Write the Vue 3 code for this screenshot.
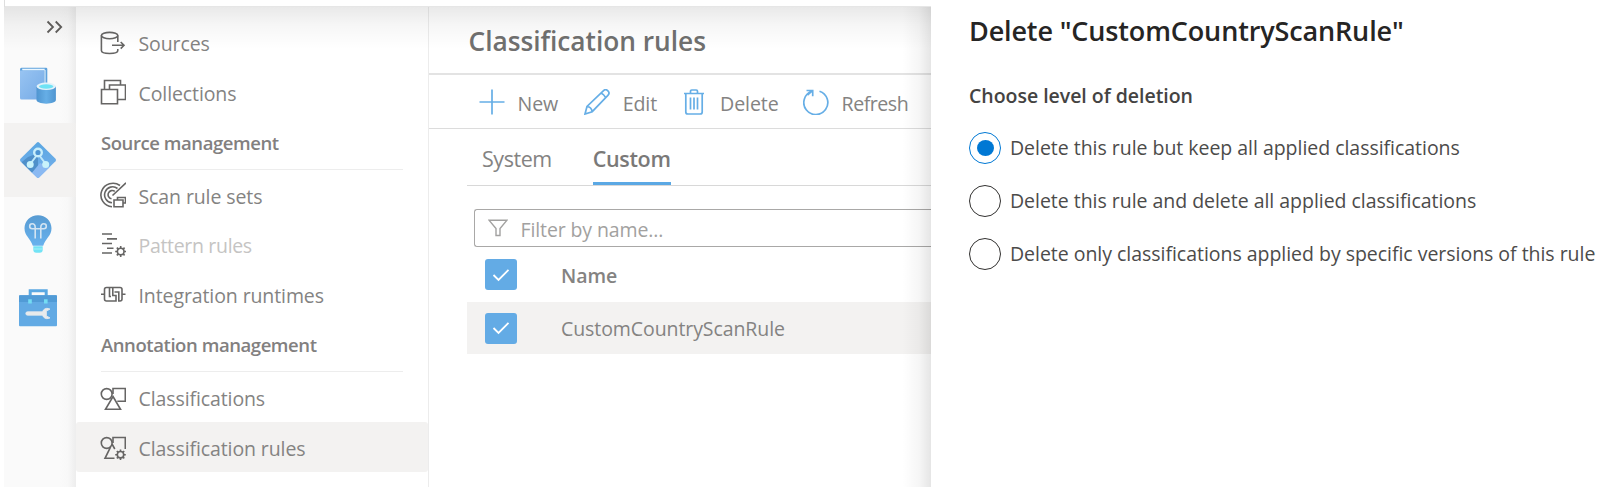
<script setup>
import { ref } from 'vue'

const rail = ['catalog', 'map', 'insights', 'manage']
const activeRail = 'map'

const sections = [
  { items: [{ label: 'Sources', icon: 'sources' }, { label: 'Collections', icon: 'collections' }] },
  {
    title: 'Source management',
    items: [
      { label: 'Scan rule sets', icon: 'scan' },
      { label: 'Pattern rules', icon: 'pattern', disabled: true },
      { label: 'Integration runtimes', icon: 'runtime' }
    ]
  },
  {
    title: 'Annotation management',
    items: [
      { label: 'Classifications', icon: 'classifications' },
      { label: 'Classification rules', icon: 'rules', active: true }
    ]
  }
]

const options = [
  'Delete this rule but keep all applied classifications',
  'Delete this rule and delete all applied classifications',
  'Delete only classifications applied by specific versions of this rule'
]
const selected = ref(0)
</script>

<template>
  <div class="page">
    <div class="app">
      <aside class="rail">
        <button class="expand" aria-label="Expand">
          <svg width="18" height="14" viewBox="0 0 18 14"><path d="M1.500 1.500 7 7l-5.500 5.500M9.700 1.500 15.200 7l-5.500 5.500" /></svg>
        </button>
        <div v-for="name in rail" :key="name" class="rail-item" :class="{ active: name === activeRail }">
          <svg v-if="name === 'catalog'" width="38" height="38" viewBox="0 0 38 38">
            <defs>
              <linearGradient id="book" x1="0" y1="0" x2="1" y2="1"><stop offset="0" stop-color="#98c4f2" /><stop offset="1" stop-color="#76abe6" /></linearGradient>
              <linearGradient id="cyl" x1="0" x2="1"><stop offset="0" stop-color="#4f95d0" /><stop offset=".5" stop-color="#66aee6" /><stop offset="1" stop-color="#4f95d0" /></linearGradient>
            </defs>
            <path d="M2.500 .8H27a1.300 1.300 0 0 1 1.300 1.300V31H1V2.500Q1 .8 2.500 .8z" fill="#5fa2dc" />
            <path d="M3 1.800H25.700V3.600H3.500z" fill="#eaf6ff" />
            <path d="M1 3.400H25V32.500H2.500Q1 32.500 1 31z" fill="url(#book)" />
            <path d="M26 3v14" stroke="#d9ebfb" stroke-width="1.200" />
            <path d="M17.500 19.500v13.600c0 2 4.200 3.600 9.700 3.600s9.700-1.600 9.700-3.600V19.500z" fill="url(#cyl)" />
            <ellipse cx="27.200" cy="19.300" rx="9.700" ry="3.700" fill="#e3f2fa" />
            <ellipse cx="27.200" cy="19.500" rx="7.200" ry="2.200" fill="#6fe3f5" />
          </svg>
          <svg v-else-if="name === 'map'" width="38" height="38" viewBox="0 0 38 38">
            <defs><linearGradient id="dia" x1="0" y1="0" x2="0" y2="1"><stop offset="0" stop-color="#5aa7e2" /><stop offset="1" stop-color="#76b0ec" /></linearGradient></defs>
            <path d="M17.700 1.700Q19 .5 20.300 1.700L36.500 17.700Q37.700 19 36.500 20.300L20.300 36.300Q19 37.500 17.700 36.300L1.500 20.300Q.3 19 1.500 17.700z" fill="url(#dia)" />
            <path d="M19 12V27L13 31.800 2.500 21.300 9 16z" fill="#4f90ca" />
            <path d="M21 22 30.500 26.300 20.300 36.300Q19 37.500 17.700 36.300L13 31.800z" fill="#8ab9f2" />
            <path d="M18 14 12 22M20 14l6 8" stroke="#bfe9fb" stroke-width="2" />
            <circle cx="19" cy="11.500" r="3.800" fill="#4e95d3" stroke="#c8eefb" stroke-width="2.400" />
            <circle cx="11.200" cy="23.500" r="3.500" fill="#c8f2fb" /><circle cx="26.700" cy="23.500" r="3.500" fill="#c8f2fb" />
          </svg>
          <svg v-else-if="name === 'insights'" width="38" height="38" viewBox="0 0 38 38">
            <defs><linearGradient id="bulb" x1="0" y1="0" x2="0" y2="1"><stop offset="0" stop-color="#589bd2" /><stop offset="1" stop-color="#68b2ee" /></linearGradient></defs>
            <path d="M19 .3C11.300 .3 5.500 6.200 5.500 13.300c0 7.700 6 9.900 8.300 17.500h10.400c2.300-7.600 8.300-9.800 8.300-17.500C32.500 6.200 26.700 .3 19 .3z" fill="url(#bulb)" />
            <path d="M14.300 31.300h9.400v3.500a3 3 0 0 1-3 3h-3.400a3 3 0 0 1-3-3z" fill="#73e3f5" /><path d="M14.300 34h9.400" stroke="#a6f1fa" />
            <path d="M16.200 23.500V12.500c0-2-1.200-3.800-3-3.800a2.500 2.500 0 0 0 0 5H24.800a2.500 2.500 0 0 0 0-5c-1.800 0-3 1.800-3 3.800V23.500" fill="none" stroke="#d3e4f2" stroke-width="1.600" />
          </svg>
          <svg v-else width="38" height="38" viewBox="0 0 38 38">
            <path d="M11.200 7V1.800h16V7" fill="none" stroke="#5ba8e2" stroke-width="3" />
            <rect y="6.300" width="38" height="31" rx="1" fill="#62aae4" /><path d="M0 13h38V7.300q0-1-1-1H1q-1 0-1 1z" fill="#519bd6" />
            <path d="M9.200 10.300h3.600v4.300H9.200zM25 10.300h3.600v4.300H25z" fill="#74dcf3" />
            <path d="M8.500 22.800H23.500c.8-2.600 3.400-4 6-3.300l1.500.6-3.600 2v4.800l3.600 2-1.500.6c-2.600.7-5.200-.7-6-3.300H8.500a1.700 1.700 0 0 1 0-3.400z" fill="#e8eaec" stroke="#e8eaec" stroke-width=".8" />
          </svg>
        </div>
      </aside>

      <nav class="nav">
        <template v-for="(section, s) in sections" :key="s">
          <h2 v-if="section.title" class="nav-title">{{ section.title }}</h2>
          <a v-for="item in section.items" :key="item.label" class="nav-item" :class="{ active: item.active, disabled: item.disabled }">
            <svg class="line-icon" width="26" height="26" viewBox="0 0 26 26">
              <template v-if="item.icon === 'sources'">
                <ellipse cx="9.600" cy="5.600" rx="8.200" ry="3.200" />
                <path d="M1.400 5.600V20.500c0 1.800 3.600 3 8.200 3s8.200-1.200 8.200-3V19M17.800 5.600V12M12 15.300H24M20.700 12l3.300 3.300-3.300 3.300" />
              </template>
              <template v-else-if="item.icon === 'collections'">
                <path d="M1.500 10.500H17.500V24.700H1.500zM9.500 10.500V6H25.500V20.500H17.500M4.500 10.500V1.500H20.500V6" />
              </template>
              <template v-else-if="item.icon === 'scan'">
                <path d="M20 3.500A12 11.800 0 1 0 12 24.800M17.500 6.500A8 8 0 1 0 12 20.800M14.800 9.300A4.200 4.200 0 1 0 11.500 16.800M12.500 13.500 26 .8M14 18H23V24.700H14zM17.500 18V15.500H25.500V21H23" />
              </template>
              <template v-else-if="item.icon === 'pattern'">
                <path d="M2 2H12M7 6.900H17M2 11.500H12M7 16.200H13.500M2 21H12" />
                <circle cx="20.700" cy="19.500" r="3.300" />
                <path d="M20.700 14v2M20.700 23v2M15.200 19.500h2M24.200 19.500h2M16.800 15.600l1.500 1.500M23.100 21.900l1.500 1.500M24.600 15.600l-1.500 1.500M18.300 21.900l-1.500 1.500" />
              </template>
              <template v-else-if="item.icon === 'runtime'">
                <path d="M1 13.200H4.500M22 13.200H25.500M9.500 6.500H6.500q-2 0-2 2V18q0 2 2 2H16V14.500H12.800V6.500H9.500V15.500H11M12.800 6.500H20q2 0 2 2V18q0 2-2 2H18.800V11H14.500" />
              </template>
              <template v-else-if="item.icon === 'classifications'">
                <circle cx="6.700" cy="9" r="5.400" />
                <path d="M13 9V3.500H25.300V16.200H17.300M13 11.500 20.500 24.300H5.500z" />
              </template>
              <template v-else>
                <circle cx="6.700" cy="9" r="5.400" />
                <path d="M13 9V3.500H25.300V15M10.500 13.200 5 24.300H14.500M12 10l2.800 5" />
                <circle cx="20.500" cy="20.700" r="3.200" />
                <path d="M20.500 15.400v2M20.500 24v2M15.200 20.700h2M23.800 20.700h2M16.800 17l1.400 1.400M22.900 23l1.400 1.400M24.200 17l-1.400 1.400M18.200 23l-1.400 1.400" />
              </template>
            </svg>
            <span>{{ item.label }}</span>
          </a>
        </template>
      </nav>

      <main class="main">
        <h1 class="title">Classification rules</h1>
        <div class="toolbar">
          <button class="tool new"><svg width="26" height="26" viewBox="0 0 26 26"><path d="M13 .5v25M.5 13h25" /></svg><span>New</span></button>
          <button class="tool edit"><svg width="26" height="26" viewBox="0 0 26 26"><path d="M1 25l2-7.500L19.300 1.800a3.200 3.200 0 0 1 4.600 4.600L8.200 22.700zM3 17.500c2.600.2 4.800 2.400 5.200 5.200M17 4c1.800.8 3.800 2.700 4.700 4.700" /></svg><span>Edit</span></button>
          <button class="tool delete"><svg width="22" height="26" viewBox="0 0 22 26"><path d="M1 4.500H21M7.500 4.500V2.300Q7.500 1 8.800 1h4.400q1.300 0 1.300 1.300v2.200M2.800 4.500V23Q2.800 25 4.800 25H17.200q2 0 2-2V4.500M7.500 8.500V20.500M11 8.500V20.500M14.500 8.500V20.500" /></svg><span>Delete</span></button>
          <button class="tool refresh"><svg width="26" height="26" viewBox="0 0 26 26"><path d="M16.500 2.200A12 12 0 1 1 8.800 2.300M3.500 1.500H9.700V7.300M9.500 1.700 4.500 6" /></svg><span>Refresh</span></button>
        </div>
        <div class="tabs">
          <span class="tab">System</span>
          <span class="tab current">Custom</span>
        </div>
        <div class="filter">
          <svg width="20" height="18" viewBox="0 0 20 18"><path d="M1 1.200H19L12 9.500V16.500H8V9.500z" /></svg>
          <span>Filter by name...</span>
        </div>
        <div class="row head">
          <span class="check"><svg width="18" height="14" viewBox="0 0 18 14"><path d="M1.500 7 6.500 12 16.500 1.800" /></svg></span>
          <span class="cell">Name</span>
        </div>
        <div class="row selected">
          <span class="check"><svg width="18" height="14" viewBox="0 0 18 14"><path d="M1.500 7 6.500 12 16.500 1.800" /></svg></span>
          <span class="cell">CustomCountryScanRule</span>
        </div>
      </main>
      <div class="shade"></div>
    </div>

    <section class="panel">
      <h1 class="panel-title">Delete "CustomCountryScanRule"</h1>
      <h2 class="panel-label">Choose level of deletion</h2>
      <label v-for="(option, i) in options" :key="option" class="option" @click="selected = i">
        <span class="radio" :class="{ on: selected === i }"></span>
        <span>{{ option }}</span>
      </label>
    </section>
  </div>
</template>

<style scoped>
.page {
  display: flex;
  width: 1600px;
  height: 497px;
  overflow: hidden;
  background: #fff;
  font-family: "Open Sans", "Noto Sans", sans-serif;
  font-size: 19.5px;
  line-height: 28px;
  letter-spacing: -.03px;
  color: #848382;
}
h1, h2 { margin: 0; }
button { border: 0; padding: 0; background: none; font: inherit; color: inherit; letter-spacing: inherit; }
svg { display: block; flex: none; }
.app {
  position: relative;
  display: flex;
  flex: none;
  width: 927px;
  height: 480px;
  margin: 6px 0 0 4px;
  border-top: 1px solid #e6e6e6;
}
.app::before {
  content: "";
  position: absolute;
  left: 0;
  top: -7px;
  width: 1px;
  height: 7px;
  background: #dedede;
}
.shade {
  position: absolute;
  inset: 0;
  pointer-events: none;
  background:
    linear-gradient(to left, rgba(0, 0, 0, .1), rgba(0, 0, 0, .035) 12px, transparent 29px),
    linear-gradient(rgba(0, 0, 0, .085), rgba(0, 0, 0, .035) 18px, transparent 42px);
}

.rail {
  display: flex;
  flex-direction: column;
  flex: none;
  width: 72px;
  background: linear-gradient(to left, #ededed, #f8f8f8 8px, #fafafa 16px);
}
.expand { display: flex; height: 42px; padding: 13px 0 0 42px; box-sizing: border-box; }
.expand path { fill: none; stroke: #605e5c; stroke-width: 1.8; }
.rail-item { display: flex; align-items: center; height: 74px; padding-left: 14.500px; }
.rail-item.active { background: linear-gradient(to left, #f0efee, #f3f2f1 6px); }

.nav {
  flex: none;
  width: 353px;
  box-sizing: border-box;
  padding-top: 11px;
  border-right: 1px solid #ececec;
}
.nav-item {
  display: flex;
  align-items: center;
  gap: 12.500px;
  height: 49.500px;
  padding-left: 24px;
  letter-spacing: -.1px;
}
.nav-item span { position: relative; top: 1.500px; }
.nav-item.active { background: #f3f2f1; border-radius: 3px; }
.nav-item.disabled span { color: #c5c4c3; letter-spacing: -.32px; }
.line-icon { fill: none; stroke: #666564; stroke-width: 1.6; }
.nav-title {
  height: 53.700px;
  box-sizing: border-box;
  margin: 0 25px;
  padding-top: 12px;
  font-size: 18.5px;
  font-weight: 600;
  letter-spacing: -.43px;
  color: #82807f;
  background: linear-gradient(#ededed, #ededed) 0 52px / 100% 1px no-repeat;
}

.main { flex: 1; min-width: 0; }
.title {
  height: 68px;
  box-sizing: border-box;
  padding: 16px 0 0 39.500px;
  border-bottom: 2px solid #e3e3e3;
  font-size: 26.3px;
  line-height: 36px;
  font-weight: 550;
  color: #70706f;
}
.toolbar {
  display: flex;
  align-items: center;
  height: 54px;
  box-sizing: border-box;
  padding-left: 50px;
  border-bottom: 1px solid #dcdcdc;
  font-size: 19.6px;
  letter-spacing: -.1px;
}
.tool { display: flex; align-items: center; gap: 12.500px; }
.tool svg { fill: none; stroke: #66aee6; stroke-width: 1.7; }
.tool span { position: relative; top: 2px; }
.edit { margin-left: 26px; }
.delete { margin-left: 26px; gap: 15px; }
.refresh { margin-left: 24px; gap: 13px; letter-spacing: -.5px; }
.tabs {
  display: flex;
  height: 57px;
  box-sizing: border-box;
  margin-left: 38px;
  padding-left: 15px;
  gap: 41px;
  border-bottom: 1px solid #d8d8d8;
  font-size: 21.5px;
  letter-spacing: -.45px;
}
.tab { height: 56px; line-height: 59px; box-sizing: border-box; }
.tab.current { font-weight: 600; letter-spacing: -.35px; color: #7a7978; border-bottom: 3px solid #5ba8e4; }
.filter {
  display: flex;
  align-items: center;
  gap: 12.500px;
  height: 38px;
  box-sizing: border-box;
  margin: 23px 0 0 45px;
  padding-left: 13px;
  border: 1px solid #a9a8a7;
  border-right: 0;
  border-radius: 3px 0 0 3px;
  color: #a2a1a0;
  letter-spacing: -.12px;
}
.filter svg { fill: none; stroke: #a2a1a0; stroke-width: 1.4; }
.filter span { position: relative; top: 2px; }
.row { display: flex; align-items: center; gap: 44px; height: 52px; margin-left: 38px; padding-left: 18px; }
.row.head { height: 55px; font-weight: 600; }
.row.selected { background: #f3f2f1; }
.cell { position: relative; top: 1px; letter-spacing: -.08px; }
.check {
  display: flex;
  align-items: center;
  justify-content: center;
  width: 32px;
  height: 31px;
  border-radius: 3px;
  background: #63abe5;
}
.check path { fill: none; stroke: #fff; stroke-width: 1.8; }

.panel { flex: 1; padding: 12px 0 0 38px; color: #4c4b4a; background: #fff; white-space: nowrap; }
.panel-title {
  font-size: 27px;
  line-height: 38px;
  font-weight: 550;
  letter-spacing: -.14px;
  color: #262524;
}
.panel-label { margin: 32px 0 12px; font-size: 19.5px; line-height: 28px; font-weight: 600; color: #444342; }
.option { display: flex; align-items: center; gap: 9px; height: 52.700px; }
.radio {
  display: flex;
  width: 32px;
  height: 32px;
  box-sizing: border-box;
  border: 1px solid #323130;
  border-radius: 50%;
}
.radio.on { border-color: #0078d4; align-items: center; justify-content: center; }
.radio.on::after { content: ""; width: 17px; height: 16px; border-radius: 50%; background: #0078d4; }
</style>
